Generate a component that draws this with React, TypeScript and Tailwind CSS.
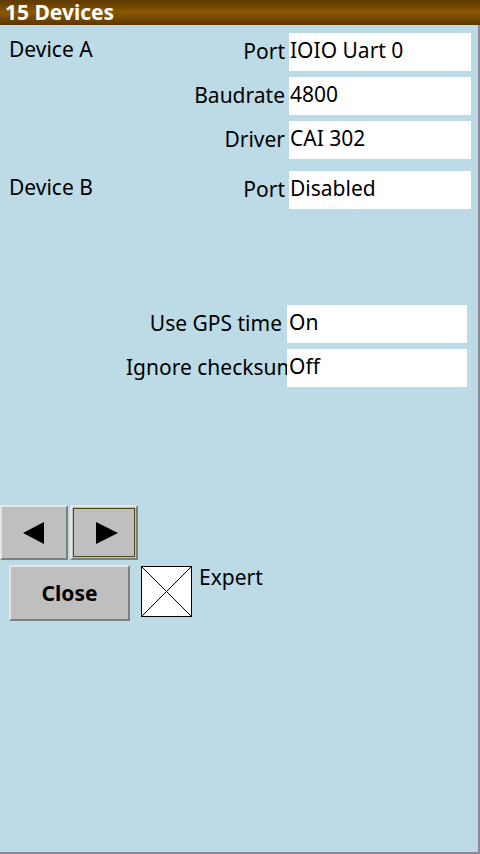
// Devices dialog — two device slots plus a couple of global NMEA options.
const FONT = "font-['Noto_Sans',sans-serif]";

function Field({ label, value }: { label: string; value: string }) {
  return (
    <div className="flex h-[38px] shrink-0">
      <div className="flex-1 flex justify-end pr-[4px] pt-[7px] whitespace-nowrap">
        {label}
      </div>
      <div className="relative w-[182px] shrink-0 bg-white pl-[1px] pt-[6px] whitespace-nowrap">
        {value}
      </div>
    </div>
  );
}

function Option({ label, value, wide }: { label: string; value: string; wide?: boolean }) {
  return (
    <div className="flex h-[38px]">
      {wide ? (
        <div className="w-[287px] shrink-0 pl-[126px] pt-[7px] whitespace-nowrap">{label}</div>
      ) : (
        <div className="w-[287px] shrink-0 flex justify-end pr-[5px] pt-[7px] whitespace-nowrap">
          {label}
        </div>
      )}
      <div className="relative w-[180px] shrink-0 bg-white pl-[2px] pt-[6px] whitespace-nowrap">
        {value}
      </div>
    </div>
  );
}

const raised =
  "bg-[#bfbfbf] border-2 border-t-[#e6e6e6] border-l-[#e6e6e6] border-b-[#7e7e7e] border-r-[#7e7e7e]";

export default function App() {
  return (
    <div className={`w-[480px] h-[854px] flex flex-col text-[21px] text-black ${FONT}`}>
      <div className="h-[25px] shrink-0 bg-gradient-to-b from-[#5e3a00] via-[#8a5700] to-[#5a3800] pl-[5px] text-[21px] font-bold leading-[25px] text-white">
        15 Devices
      </div>

      <div className="flex-1 bg-[#bddbe6] border-r-2 border-b-2 border-[#8a8a92] pt-[8px] leading-[23px]">
        {/* Device A */}
        <div className="flex pr-[7px]">
          <div className="w-[100px] pl-[9px] pt-[5px] whitespace-nowrap">Device A</div>
          <div className="flex-1 flex flex-col gap-[6px]">
            <Field label="Port" value="IOIO Uart 0" />
            <Field label="Baudrate" value="4800" />
            <Field label="Driver" value="CAI 302" />
          </div>
        </div>

        {/* Device B */}
        <div className="flex pr-[7px] mt-[12px]">
          <div className="w-[100px] pl-[9px] pt-[5px] whitespace-nowrap">Device B</div>
          <div className="flex-1 flex flex-col">
            <Field label="Port" value="Disabled" />
          </div>
        </div>

        <div className="mt-[96px] flex flex-col gap-[6px]">
          <Option label="Use GPS time" value="On" />
          <Option label="Ignore checksum" value="Off" wide />
        </div>

        {/* Page arrows */}
        <div className="mt-[118px] flex gap-[2px]">
          <div className={`w-[68px] h-[55px] flex items-center justify-center ${raised}`}>
            <svg width="22" height="22" viewBox="0 0 22 22">
              <polygon points="0,11 21,0 21,22" fill="black" />
            </svg>
          </div>
          <div className={`w-[68px] h-[55px] p-[1px] ${raised}`}>
            <div className="w-full h-full border border-[#4d4a18] flex items-center justify-center">
              <svg width="22" height="22" viewBox="0 0 22 22" className="ml-[6px]">
                <polygon points="0,0 22,11 0,22" fill="black" />
              </svg>
            </div>
          </div>
        </div>

        <div className="mt-[5px] flex items-start pl-[9px]">
          <div
            className={`w-[121px] h-[56px] flex items-center justify-center text-[21px] font-bold ${raised}`}
          >
            Close
          </div>
          <div className="ml-[11px] mt-[1px] w-[51px] h-[51px] bg-white border border-black">
            <svg width="49" height="49" viewBox="0 0 49 49" className="block">
              <line x1="0" y1="0" x2="49" y2="49" stroke="black" strokeWidth="1" />
              <line x1="49" y1="0" x2="0" y2="49" stroke="black" strokeWidth="1" />
            </svg>
          </div>
          <div className="ml-[7px] mt-[1px]">Expert</div>
        </div>
      </div>
    </div>
  );
}
